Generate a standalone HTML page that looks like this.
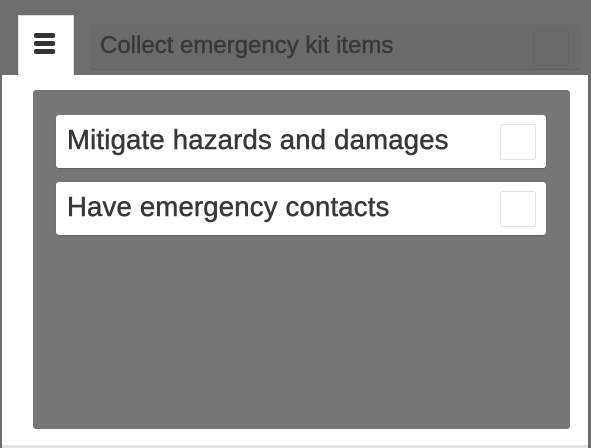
<!DOCTYPE html>
<html><head><style>
body{margin:0;width:591px;height:448px;overflow:hidden;background:#6e6e6e;font-family:"Liberation Sans",sans-serif;position:relative}
.white{position:absolute;left:2px;top:75px;width:586px;height:370px;background:#fff;border-bottom:3px solid #e4e4e4}
.panel{position:absolute;left:33px;top:90px;width:537px;height:339px;background:#777;border-radius:3px}
.card{position:absolute;left:56px;width:490px;height:53px;background:#fff;border-radius:3px;box-shadow:0 1px 1px rgba(0,0,0,.2)}
.card span{position:absolute;left:11px;top:9px;font-size:27.5px;letter-spacing:0.2px;color:#383838;-webkit-text-stroke:0.5px #383838}
.cb{position:absolute;left:444px;top:9px;width:34px;height:34px;border:1px solid #e2e2e2;border-radius:3px}
.hdr{position:absolute;left:90px;top:24px;width:490px;height:45px;background:#6a6a6a;border-radius:3px;box-shadow:0 1px 1px rgba(0,0,0,.15)}
.hdr span{position:absolute;left:10px;top:8px;font-size:24px;color:#3a3a3a;-webkit-text-stroke:0.5px #3a3a3a}
.hdr .cb{left:443px;top:6px;border-color:#646464}
.menu{position:absolute;left:18px;top:15px;width:56px;height:60px;background:#fff;border:1px solid #ddd;border-bottom:none;box-sizing:border-box}
.menu i{position:absolute;left:15px;width:21px;height:5px;background:#333;border-radius:2px}
</style></head><body>
<div class="hdr"><span>Collect emergency kit items</span><div class="cb"></div></div>
<div class="white"></div>
<div class="menu"><i style="top:17px"></i><i style="top:25px"></i><i style="top:33px"></i></div>
<div class="panel"></div>
<div class="card" style="top:115px"><span>Mitigate hazards and damages</span><div class="cb"></div></div>
<div class="card" style="top:182px"><span>Have emergency contacts</span><div class="cb"></div></div>
</body></html>
